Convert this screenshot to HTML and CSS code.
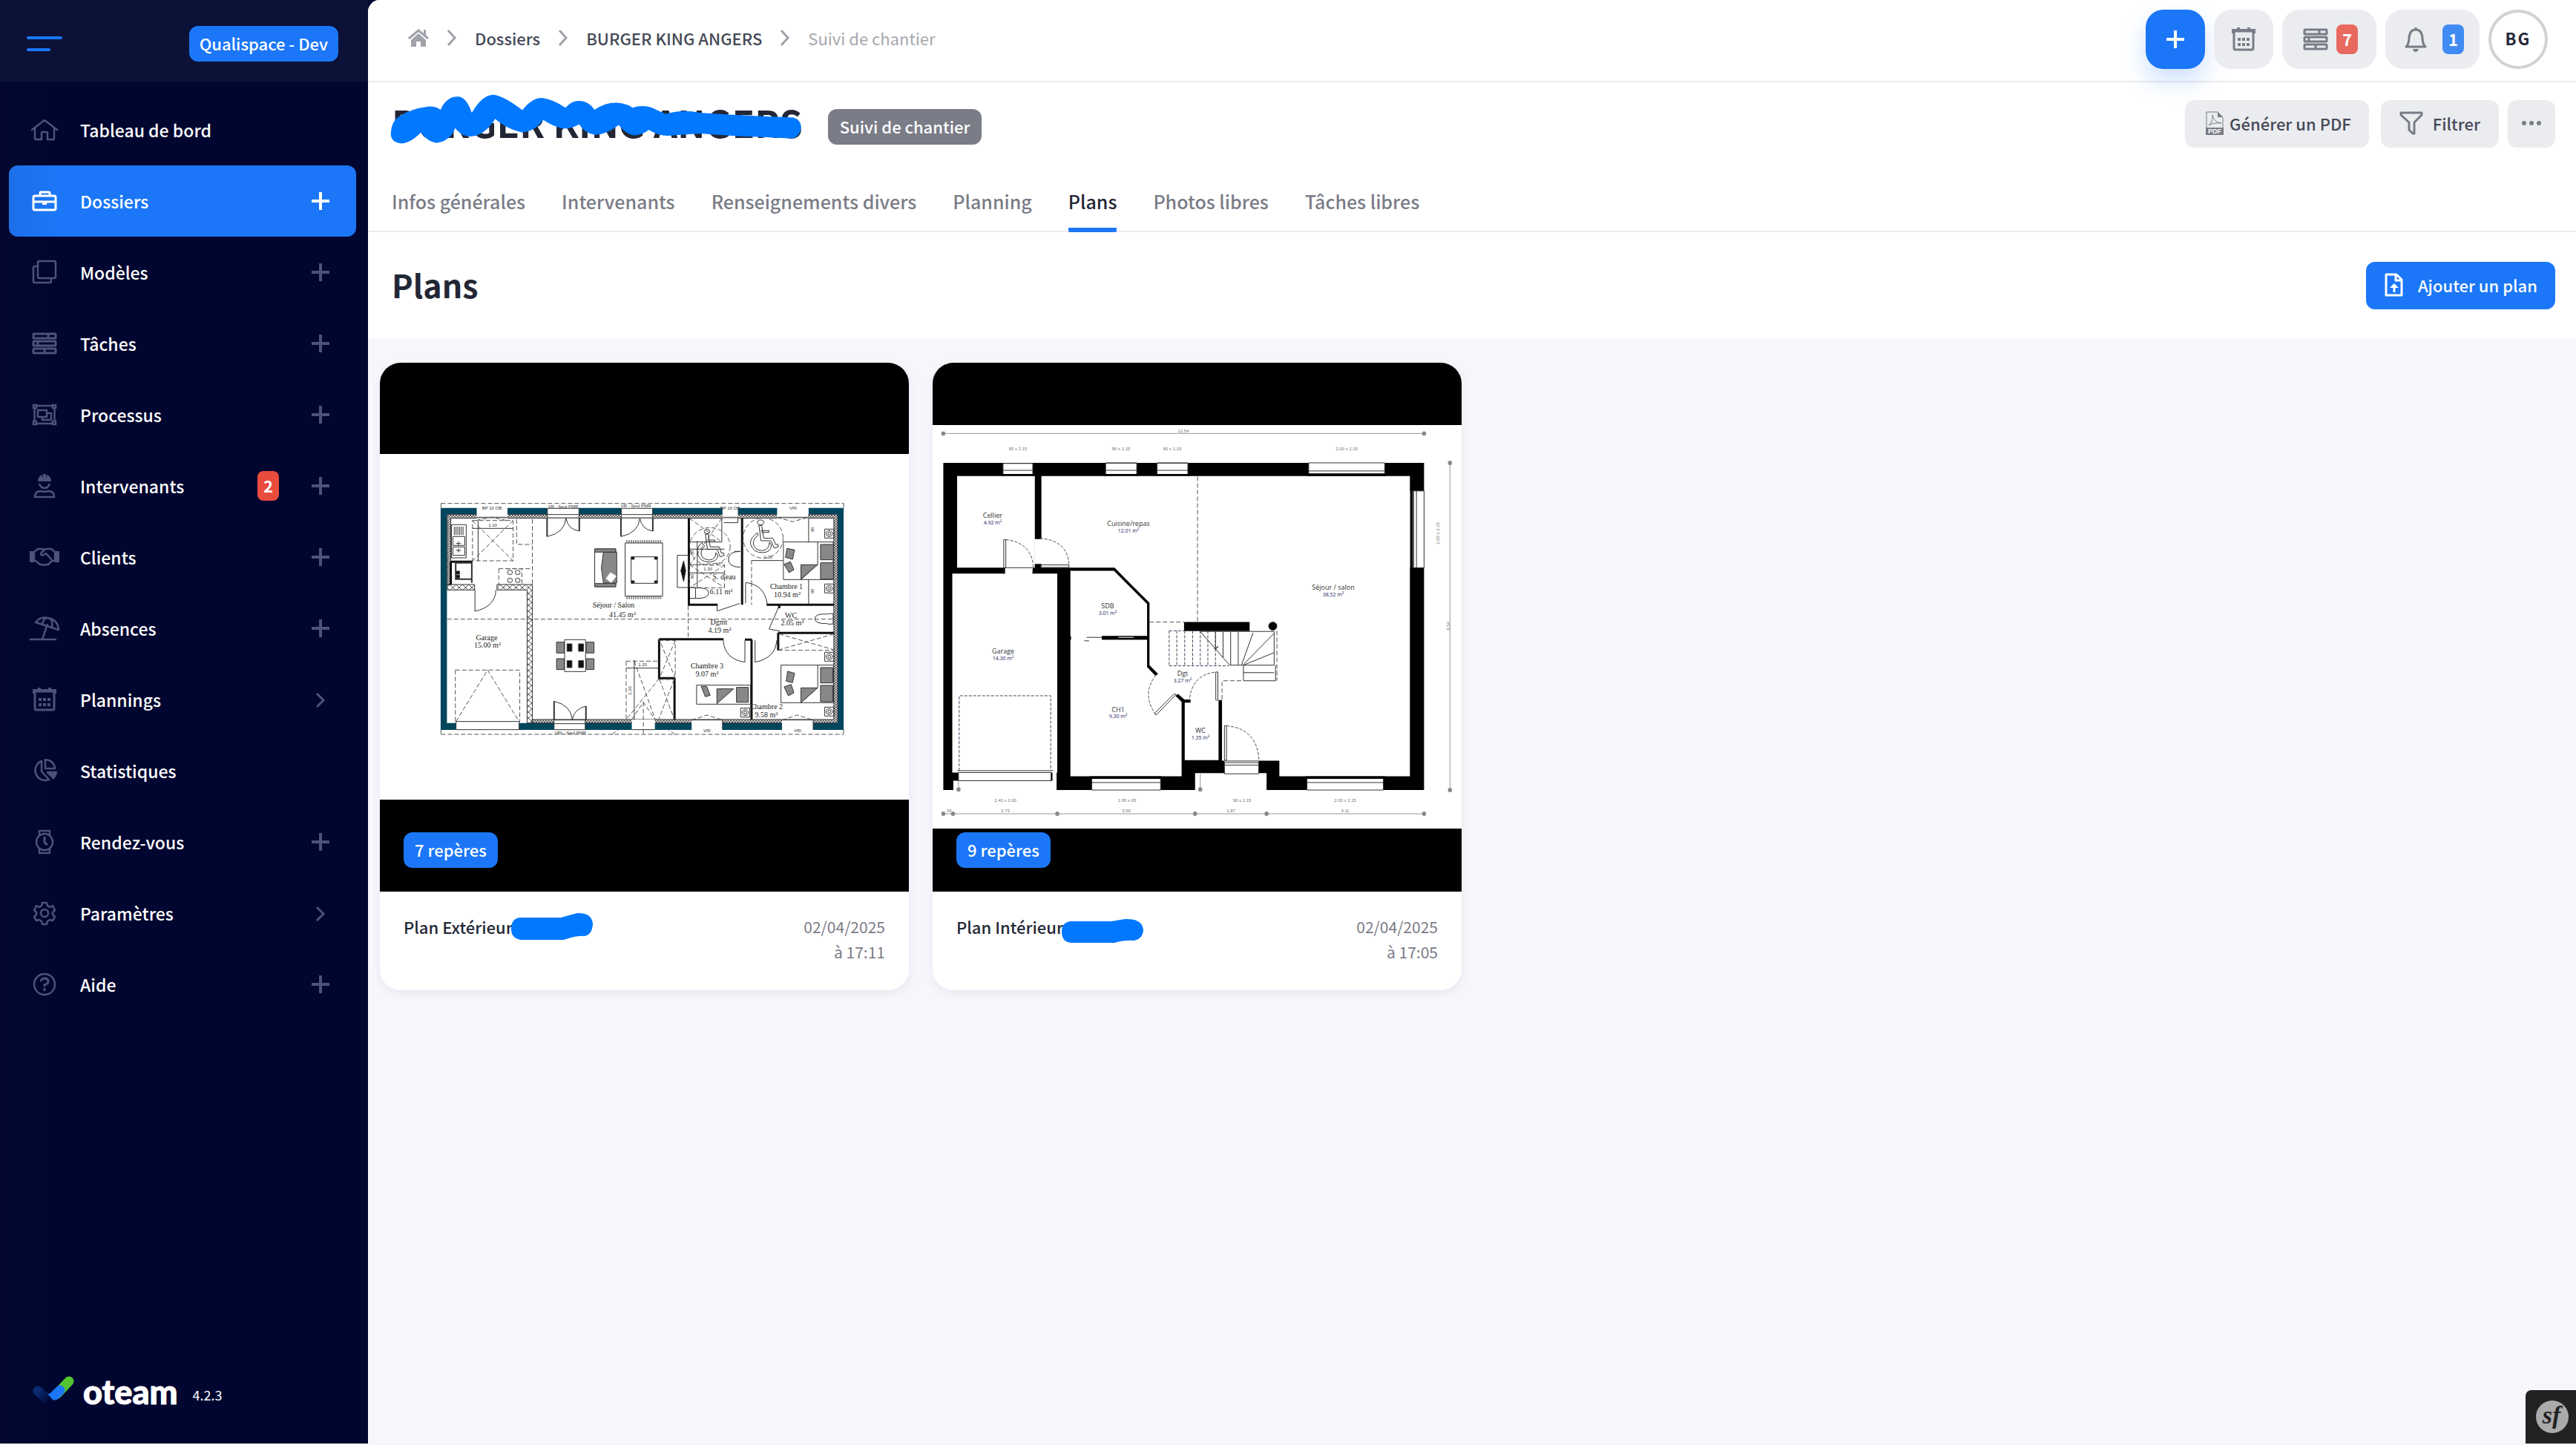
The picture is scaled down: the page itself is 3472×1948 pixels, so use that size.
FILE: index.html
```html
<!DOCTYPE html>
<html lang="fr">
<head>
<meta charset="utf-8">
<title>Plans - BURGER KING ANGERS</title>
<link rel="stylesheet" href="styles.css">
</head>
<body>
<svg class="sprite" aria-hidden="true">
  <symbol id="i-plus" viewBox="0 0 24 24"><path d="M12 0v24M0 12h24" stroke="currentColor" stroke-width="4"/></symbol>
  <symbol id="i-chevron" viewBox="0 0 24 24"><path d="M7 4l9 9-9 9" fill="none" stroke="currentColor" stroke-width="3"/></symbol>
  <symbol id="i-tasks" viewBox="0 0 40 40"><g fill="none" stroke="currentColor" stroke-width="3"><rect x="5" y="7" width="30" height="6" rx="1"/><rect x="5" y="17" width="30" height="6" rx="1"/><rect x="5" y="27" width="30" height="6" rx="1"/><path d="M25 7v6M11 17v6M20 27v6"/></g></symbol>
  <symbol id="i-calendar" viewBox="0 0 40 40"><path d="M6 12V8h28v4M13 4v5M27 4v5" fill="none" stroke="currentColor" stroke-width="4"/><rect x="7" y="9" width="26" height="25" rx="2" fill="none" stroke="currentColor" stroke-width="3"/><path d="M12 20h4M18 20h4M24 20h4M12 27h4M18 27h4M24 27h4" stroke="currentColor" stroke-width="4"/></symbol>
</svg>

<aside class="sidebar">
  <div class="sidebar-head">
    <button class="burger" aria-label="Menu"><span></span><span></span></button>
    <span class="env">Qualispace - Dev</span>
  </div>
  <nav class="menu">
    <a href="#"><svg class="ico" viewBox="0 0 40 40"><g fill="none" stroke="currentColor" stroke-width="2.500" stroke-linejoin="round" stroke-linecap="round"><path d="M3 20L20 7l17 13"/><path d="M7 18v14q0 1 1 1h8v-9q0-1 1-1h6q1 0 1 1v9h8q1 0 1-1V18"/></g></svg><span>Tableau de bord</span></a>
    <a href="#" class="active"><svg class="ico" viewBox="0 0 40 40"><g fill="none" stroke="currentColor" stroke-width="3"><rect x="5" y="13" width="30" height="19" rx="2"/><path d="M14 13V9q0-1 1-1h11q1 0 1 1v4M5 21h30"/><path d="M17 23h6" stroke-width="4"/></g></svg><span>Dossiers</span><svg class="act"><use href="#i-plus"/></svg></a>
    <a href="#"><svg class="ico" viewBox="0 0 40 40"><g fill="none" stroke="currentColor" stroke-width="2.500"><rect x="11" y="5" width="24" height="23" rx="2"/><path d="M11 12H7q-2 0-2 2v18q0 2 2 2h20q2 0 2-2v-4"/></g></svg><span>Modèles</span><svg class="act"><use href="#i-plus"/></svg></a>
    <a href="#"><svg class="ico"><use href="#i-tasks"/></svg><span>Tâches</span><svg class="act"><use href="#i-plus"/></svg></a>
    <a href="#"><svg class="ico" viewBox="0 0 40 40"><g fill="none" stroke="currentColor" stroke-width="2.500"><path d="M9 8h22M9 32h22M6.500 11v18M33.500 11v18"/><rect x="5" y="7" width="4" height="4"/><rect x="31" y="7" width="4" height="4"/><rect x="5" y="29" width="4" height="4"/><rect x="31" y="29" width="4" height="4"/><rect x="11" y="14" width="12" height="9"/><path d="M23 18h6v9H17v-4"/></g></svg><span>Processus</span><svg class="act"><use href="#i-plus"/></svg></a>
    <a href="#"><svg class="ico" viewBox="0 0 40 40"><path d="M11 14q0-7 6-9l1 5V4h4v6l1-5q6 2 6 9z" fill="currentColor"/><path d="M13 17q2 6 7 6t7-6M7 35q0-8 8-8 5 2 10 0 8 0 8 8z" fill="none" stroke="currentColor" stroke-width="2.500"/></svg><span>Intervenants</span><em class="count">2</em><svg class="act"><use href="#i-plus"/></svg></a>
    <a href="#"><svg class="ico" viewBox="0 0 40 40"><path d="M0 12h6v15H0zM34 12h6v15h-6z" fill="currentColor"/><g fill="none" stroke="currentColor" stroke-width="2.500" stroke-linejoin="round"><path d="M6 13l5-4h7l2 1 3-1h6l5 4v12h-4l-5 5-3 0-2 1-3-1-3 0-6-5H6z"/><path d="M20 10l-5 5q0 4 4 2l3-2 8 9"/></g></svg><span>Clients</span><svg class="act"><use href="#i-plus"/></svg></a>
    <a href="#"><svg class="ico" viewBox="0 0 40 40"><g fill="none" stroke="currentColor" stroke-width="2.500" stroke-linejoin="round"><path d="M0 35h36M24 14l-7 21"/><path d="M8 12Q14 4 24 6q14 2 15 16zM17 14q2-9 8-8 7 2 5 13"/></g></svg><span>Absences</span><svg class="act"><use href="#i-plus"/></svg></a>
    <a href="#"><svg class="ico"><use href="#i-calendar"/></svg><span>Plannings</span><svg class="act"><use href="#i-chevron"/></svg></a>
    <a href="#"><svg class="ico" viewBox="0 0 40 40"><g fill="none" stroke="currentColor" stroke-width="2.500" stroke-linejoin="round"><path d="M16 7a13 13 0 1 0 10 25L16 21zM21 5v12h13q-1-11-13-12z"/><path d="M24 22h12q-1 5-4 8z" fill="currentColor"/></g></svg><span>Statistiques</span></a>
    <a href="#"><svg class="ico" viewBox="0 0 40 40"><g fill="none" stroke="currentColor" stroke-width="2.500"><circle cx="20" cy="20" r="11"/><path d="M13 11V5h14v6M13 29v6h14v-6"/><path d="M20 13v8l4 3" stroke-width="3"/></g></svg><span>Rendez-vous</span><svg class="act"><use href="#i-plus"/></svg></a>
    <a href="#"><svg class="ico" viewBox="0 0 40 40"><g fill="none" stroke="currentColor" stroke-width="2.500" stroke-linejoin="round"><path d="M17 6h6l1 4 3 2 4-2 3 6-3 3v3l3 3-3 5-4-1-3 2-1 4h-6l-1-4-3-2-4 1-3-5 3-3v-3l-3-3 3-6 4 2 3-2z"/><circle cx="20" cy="20" r="5"/></g></svg><span>Paramètres</span><svg class="act"><use href="#i-chevron"/></svg></a>
    <a href="#"><svg class="ico" viewBox="0 0 40 40"><g fill="none" stroke="currentColor"><circle cx="20" cy="20" r="14" stroke-width="2.500"/><path d="M15 16q1-4 5-4 5 0 5 4 0 3-5 5v2M20 25v4" stroke-width="3"/></g></svg><span>Aide</span><svg class="act"><use href="#i-plus"/></svg></a>
  </nav>
  <div class="brand">
    <svg class="brand-mark" viewBox="0 0 56 44"><defs><linearGradient id="navy" x1="0" y1="0" x2="1" y2="1"><stop offset="0" stop-color="#0a2a72"/><stop offset="1" stop-color="#010630"/></linearGradient></defs><g fill="none" stroke-linecap="round" stroke-width="13"><path d="M7 21l16 15" stroke="url(#navy)"/><path d="M33 25L49 8" stroke="#52c42f"/><path d="M30 27l7-7" stroke="#1b77f7"/></g><path d="M20 25q5 0 8-4l5 9-4 4z" fill="#1b77f7"/></svg>
    <span class="brand-name">oteam</span>
    <span class="version">4.2.3</span>
  </div>
</aside>

<main class="page">
  <header class="topbar">
    <nav class="crumbs">
      <a href="#" aria-label="Accueil"><svg class="home" viewBox="0 0 28 24"><path d="M14 6L4 15v9h7v-7h6v7h7v-9z" fill="currentColor"/><path d="M1 13L14 2l13 11" fill="none" stroke="currentColor" stroke-width="3"/><path d="M21 1h3v7h-3z" fill="currentColor"/></svg></a>
      <svg class="sep" viewBox="0 0 14 24"><path d="M2 2l9 10-9 10" fill="none" stroke="currentColor" stroke-width="3"/></svg>
      <a href="#">Dossiers</a>
      <svg class="sep" viewBox="0 0 14 24"><path d="M2 2l9 10-9 10" fill="none" stroke="currentColor" stroke-width="3"/></svg>
      <a href="#">BURGER KING ANGERS</a>
      <svg class="sep" viewBox="0 0 14 24"><path d="M2 2l9 10-9 10" fill="none" stroke="currentColor" stroke-width="3"/></svg>
      <span class="here">Suivi de chantier</span>
    </nav>
    <div class="tools">
      <button class="tool add" aria-label="Ajouter"><svg viewBox="0 0 24 24"><path d="M12 0v24M0 12h24" stroke="currentColor" stroke-width="4"/></svg></button>
      <button class="tool" aria-label="Calendrier"><svg class="ico"><use href="#i-calendar"/></svg></button>
      <button class="tool wide" aria-label="Tâches"><svg class="ico"><use href="#i-tasks"/></svg><em class="count soft">7</em></button>
      <button class="tool wide" aria-label="Notifications"><svg class="ico" viewBox="0 0 40 40"><path d="M20 4v3M7 30q4-4 4-12 1-11 9-11t9 11q0 8 4 12z" fill="none" stroke="currentColor" stroke-width="3" stroke-linejoin="round"/><path d="M16 33h8q-1 4-4 4t-4-4z" fill="currentColor"/></svg><em class="count info">1</em></button>
      <button class="avatar">BG</button>
    </div>
  </header>

  <section class="heading">
    <div class="heading-row">
      <div class="title">
        <h1>BURGER KING ANGERS</h1>
        <svg class="scribble" viewBox="62 380 968 205" preserveAspectRatio="none"><path d="M65 540Q66 490 85 470Q110 440 155 430Q172 430 182 443Q195 390 222 390Q242 390 255 455Q280 382 305 382Q330 386 374 445Q395 395 420 395Q445 400 475 435Q490 405 507 407Q530 408 543 443Q570 413 595 415Q620 418 632 435Q662 418 690 445L710 460Q750 440 790 455L860 463L940 470L1010 475Q1028 485 1028 515Q1026 550 1008 560L880 550L790 540L715 549Q692 549 670 525Q655 548 635 547Q615 540 600 505Q570 545 545 545Q520 540 507 502Q485 525 465 518Q445 510 423 485Q400 535 372 535Q335 520 310 480Q285 550 250 552Q230 550 216 518Q205 570 172 578Q150 572 136 535Q110 580 88 580Q65 575 65 540Z"/></svg>
      </div>
      <span class="status">Suivi de chantier</span>
      <div class="actions">
        <button class="btn pdf"><svg viewBox="0 0 24 32"><path d="M1 31V1h15l7 7v23z" fill="none" stroke="currentColor"/><path d="M16 1v7h7z" fill="currentColor"/><path d="M4 19q6-5 5-14 2 10 12 11-10-1-17 3z" fill="none" stroke="currentColor"/><path d="M0 22h24v10H0z" fill="currentColor"/><text x="12" y="30" text-anchor="middle">PDF</text></svg>Générer un PDF</button>
        <button class="btn filter"><svg viewBox="0 0 32 32"><path d="M2 2h28v3L20 15v15h-2l-5-5V15L2 5z" fill="none" stroke="currentColor" stroke-width="3" stroke-linejoin="round"/></svg>Filtrer</button>
        <button class="btn more" aria-label="Plus d'options"><svg viewBox="0 0 28 8"><circle cx="4" cy="4" r="3"/><circle cx="14" cy="4" r="3"/><circle cx="24" cy="4" r="3"/></svg></button>
      </div>
    </div>
    <nav class="tabs">
      <a href="#">Infos générales</a>
      <a href="#">Intervenants</a>
      <a href="#">Renseignements divers</a>
      <a href="#">Planning</a>
      <a href="#" class="on">Plans</a>
      <a href="#">Photos libres</a>
      <a href="#">Tâches libres</a>
    </nav>
  </section>

  <section class="section-head">
    <h2>Plans</h2>
    <button class="btn primary"><svg viewBox="0 0 32 32"><path d="M5 2h14l7 7v21H5zM18 2v8h8" fill="none" stroke="currentColor" stroke-width="3" stroke-linejoin="round"/><path d="M16 26v-7" stroke="currentColor" stroke-width="3"/><path d="M10 20l6-6 6 6z" fill="currentColor"/></svg>Ajouter un plan</button>
  </section>

  <section class="cards">
    <article class="card">
      <div class="thumb">
        <svg class="plan" viewBox="0 0 713 713">
          <defs>
            <pattern id="dots" width="8" height="10" patternUnits="userSpaceOnUse"><rect width="8" height="10" fill="#fff"/><path d="M0 0l8 10M8 0l-8 10" stroke="#222" stroke-width="2"/></pattern>
            <pattern id="cross" width="18" height="24" patternUnits="userSpaceOnUse"><path d="M0 0l18 24M18 0L0 24" stroke="#222" stroke-width="2"/></pattern>
          </defs>
          <rect y="123" width="713" height="466" fill="#fff"/>
          <g class="lines" transform="translate(-12 111) scale(.4719 .3333)">
            <path class="dash" d="M200 236H1350M200 1170H1350M200 236v30M1350 236v30M200 1150v20M1350 1150v20"/>
            <path fill="#02465e" stroke="none" fill-rule="evenodd" d="M199 254H1350V1152H199zM217 280V1124H1333V280z"/>
            <path fill="url(#dots)" d="M218 281H1333V1124H460V1110H1322V296H228V565H218z"/>
            <path fill="url(#cross)" d="M218 564h78v22h-78zM360 564h101v560h-15V586h-86z"/>
            <path fill="#fff" stroke="none" d="M302 252h88v44h-88zM504 252h90v44h-90zM715 252h89v44h-89zM1004 252h44v44h-44zM1160 252h90v44h-90zM243 1116h180v38H243zM523 1112h89v42h-89zM745 1110h66v44h-66zM916 1110h88v44h-88zM1174 1110h89v44h-89z"/>
            <path d="M302 292h88M504 256h90v38h-90zM715 256h89v38h-89zM504 281h90M715 281h89M1004 292h44M1160 292h90M243 1118h180v33H243zM523 1112h89v39h-89zM523 1127h89M745 1151h66M916 1112h88v39M1174 1112h89v39"/>
            <path class="mid" d="M503 296v74M595 296v52M714 296v74M805 296v52M523 1112v-76M614 1112v-56"/>
            <path d="M503 370q50-14 54-74 6 46 38 52M714 370q50-14 54-74 6 46 37 52M523 1036q48 16 52 74 6-44 39-54M297 586v86q58-18 60-86M1006 790q4 76 62 88v-88M1097 790v88q58-16 62-88M1070 640v-84q54 8 62 88M989 645v26l64-30M1166 650l-29 94 30 8"/>
            <path class="wall" d="M908 296v350h82M1060 296v350M1130 646h192M1166 650v10M823 785h184M1068 787h20M823 785v158h44M867 943v168M1087 787v324M1163 760h160M1163 760v70M228 472h62M228 472v92"/>
            <path class="mid" d="M242 476v66h46v15M288 476v66M242 476h46"/>
            <path class="dash" d="M461 300v265M416 300v102h45M365 500h96M365 500v65M385 500h46v60M218 704h1104M906 650v126M290 305h116v163H290zM290 305l116 163M406 305L290 468M241 910h184v210M241 910v210M243 1118l90-208 90 208M729 874h94M729 874v236l92-162M752 874l60 236M745 1110l33-70 33 70M778 1040v130M688 1170l20-20M868 1170l-20-20M822 790h47v152l-44-150M869 790l-44 150M822 948h44M866 948l-44 160M824 948l42 160M910 485h100v92H910zM910 485l100 92M1010 485l-100 92M910 296l92 96M1002 296l-92 190 95-10M1166 764l156 64M1322 764l-156 64M1163 830h160M1087 466v90M1087 556v90M1250 280v10M300 305l46-14 40 14M1160 292l44 18 46-18M916 1112l44-20 44 20M1174 1112l44-20 44 20"/>
            <path d="M306 305v163M290 337h116M752 870v242M729 902h94M1087 467h90M1250 296v96M1250 544v100M932 388v188M910 421h100M910 517h100M1002 296v96h-92M1038 430h17M1048 294v20h-40"/>
            <path d="M230 322h42v134h-42zM234 370h34v36h-34zM234 412h34v34h-34zM238 330v34M243 330v34M248 330v34M253 330v34M258 330v34M263 330v34M243 398h14M243 426h14M250 390v16M250 418v16M1055 430q-34 0-34 32t34 32M911 576h16v44h-16M927 578q36-4 38 20 0 24-38 22M1304 682h16v42h-16M1304 684q-36-4-36 18 0 22 36 20"/>
            <ellipse class="dash" cx="968" cy="410" rx="58" ry="76"/><ellipse class="dash" cx="1120" cy="376" rx="57" ry="81"/>
            <g><ellipse cx="1113" cy="313" rx="9" ry="10"/><path d="M1108 325l6 62h28l10 30 12-6-2-10-6 2-8-26h-26l-6-52zM1113 346h24v7h-22M1104 355q-22 20-20 46 8 36 36 34 22-2 24-30l-6-12q0 32-22 34-22-4-24-28 0-22 14-34z"/><ellipse cx="960" cy="350" rx="8" ry="9"/><path d="M955 360l6 62h28l8 30 12-6-2-10-6 2-6-26h-26l-6-52zM960 384h22v7h-20M945 395q-16 20-12 46 8 34 34 32 22-2 24-26l-6-12q0 28-20 30-20-4-22-24 0-20 10-32z"/></g>
            <path d="M726 396h107v215H726zM743 452h75v107h-75zM639 420h60v153h-60zM875 446h32v130h-32zM553 787h60v129h-60zM1178 392h142v152h-142zM1276 392v90l-48 62M1171 890h150v152h-150zM1276 890v90l-48 62M930 971h154v77H930z"/>
            <path class="teeth" d="M730 390h102M730 617h102"/>
            <path class="grey" d="M664 433h38v125h-38l-6-60zM639 420h60v13h-60zM639 560h60v13h-60zM1284 402h37v62h-37zM1284 476h37v66h-37zM1228 484h48l-48 58zM1188 418l22 6-6 38-20-8zM1180 482l18-10 10 32-14 12zM1284 900h35v62h-35zM1284 972h35v66h-35zM1228 982h48l-48 60zM1190 915l20 8-6 38-18-6zM1180 978l20-10 8 34-16 12zM1044 980h34v60h-34zM988 986h48l-48 60zM943 976l16 0 10 36-14 6zM530 797h22v44h-22zM615 797h22v44h-22zM530 864h22v44h-22zM615 864h22v44h-22z"/>
            <path fill="#fff" stroke="#fff" d="M672 540l12-24 16 14-14 26z"/>
            <path fill="#111" d="M560 804h14v30h-14zM593 804h14v30h-14zM560 872h14v28h-14zM593 872h14v28h-14zM744 453h8v9h-8zM810 453h8v9h-8zM744 549h8v9h-8zM810 549h8v9h-8zM893 468l6 40-6 44-8-44zM243 510h10v12h-10zM243 526h10v12h-10z"/>
            <g><ellipse cx="1309" cy="358" rx="9" ry="12"/><ellipse cx="1309" cy="358" rx="4" ry="6"/><path d="M1296 340h26v36h-26zM1296 562h26v36h-26zM1296 838h26v36h-26zM1296 1060h26v36h-26zM1056 1064h26v36h-26z"/><ellipse cx="1309" cy="580" rx="9" ry="12"/><ellipse cx="1309" cy="580" rx="4" ry="6"/><ellipse cx="1309" cy="856" rx="9" ry="12"/><ellipse cx="1309" cy="856" rx="4" ry="6"/><ellipse cx="1309" cy="1078" rx="9" ry="12"/><ellipse cx="1309" cy="1078" rx="4" ry="6"/><ellipse cx="1069" cy="1082" rx="9" ry="12"/><ellipse cx="1069" cy="1082" rx="4" ry="6"/></g>
            <g><ellipse cx="397" cy="515" rx="7" ry="9"/><ellipse cx="419" cy="515" rx="7" ry="9"/><ellipse cx="397" cy="547" rx="7" ry="9"/><ellipse cx="419" cy="547" rx="7" ry="9"/></g>
          </g>
          <g class="serif">
            <text x="315" y="330">Séjour / Salon</text><text x="327" y="343">41.45 m²</text>
            <text x="144" y="374">Garage</text><text x="145" y="384">15.00 m²</text>
            <text x="464" y="292">S. d'eau</text><text x="460" y="312">6.11 m²</text>
            <text x="548" y="305">Chambre 1</text><text x="549" y="316">10.94 m²</text>
            <text x="554" y="344">WC</text><text x="556" y="354">2.05 m²</text>
            <text x="457" y="353">Dgmt</text><text x="458" y="364">4.19 m²</text>
            <text x="441" y="412">Chambre 3</text><text x="441" y="423">9.07 m²</text>
            <text x="521" y="467">Chambre 2</text><text x="521" y="478">9.58 m²</text>
          </g>
          <g class="tiny">
            <text x="151" y="198">BP 10 OB</text><text x="247" y="196">VR - Seul PMR</text><text x="345" y="195">VR - Seul PMR</text><text x="472" y="198">BP 10 OB</text><text x="557" y="198">VRI</text>
            <text x="257" y="501">VRI - Seul PMR</text><text x="441" y="498">VRI</text><text x="563" y="498">VRI</text>
            <text x="152" y="221">1.10</text><text x="523" y="264">1.20</text><text x="442" y="280">1.30</text><text x="354" y="409">1.20</text><text x="339" y="442" transform="rotate(-90 339 442)">2.20</text>
            <text x="585" y="225" transform="rotate(-90 585 225)">90</text><text x="585" y="308" transform="rotate(-90 585 308)">90</text><text x="423" y="256" transform="rotate(-90 423 256)">80</text><text x="423" y="288" transform="rotate(-90 423 288)">80</text>
          </g>
        </svg>
        <span class="marks">7 repères</span>
      </div>
      <footer><h3>Plan Extérieur<svg class="mask" viewBox="0 0 112 44"><path d="M12 9H68L90 3Q110 2 111 18 110 32 100 34 90 33 72 39H14Q1 37 1 24 1 11 12 9z"/></svg></h3><time>02/04/2025<br>à 17:11</time></footer>
    </article>

    <article class="card">
      <div class="thumb">
        <svg class="plan" viewBox="0 0 713 713">
          <rect y="84" width="713" height="544" fill="#fff"/>
          <g class="lines" transform="translate(-7 -9) scale(.4655 .4209)">
            <path stroke="none" fill="#000" fill-rule="evenodd" d="M46 342H1438V1390H982V1336H775V1390H374V1334H362V1360H75V1390H46zM86 384V678H311V384zM330 384V678H542L643 790V990L668 1018 660 1024 636 996V908H414V1346H736V1108L718 1088 726 1082 744 1100H762V1110H745V1294H843V1102H853V1296H1019V1346H1397V384zM72 697V1334H376V697zM414 688V898H636V794L540 688z"/>
            <path stroke="none" fill="#fff" d="M310 586h22v80h-22zM225 676h80v24h-80zM219 344h86v40h-86zM516 344h90v40h-90zM665 344h89v40h-89zM1104 342h220v38h-220zM1397 432h42v246h-42zM90 1328h268v32H90zM476 1348h199v42H476zM1099 1348h221v42h-221zM860 1298h99v40h-99zM416 892h89v20h-89z"/>
            <path d="M219 344h86v36h-86zM219 366h86M516 342h90v38h-90zM516 366h90M665 342h89v38h-89zM665 366h89M1104 342h220v36h-220zM1104 368h220M1408 432h30v246h-30zM1416 432v246M90 1334h268v26H90zM86 1328h278M476 1352h199v38H476zM476 1366h199M1099 1352h221v38h-221zM1099 1366h221M860 1302h99v36h-99zM860 1310h99M221 588h6v90h-6zM328 669h82v8h-82zM835 1012h6v90h-6zM860 1184h6v110h-6zM662 1150l58-66-6-2-56 62zM225 678h80M461 901h50M454 912h14M305 684v14M221 684v14"/>
            <path stroke="none" fill="#000" d="M743 852h190v29H743zM505 896h132v12H505zM512 378h98v6h-98zM660 378h98v6h-98zM1100 376h228v8h-228zM1398 430h8v252h-8zM470 1346h208v8H470zM1095 1346h230v8h-230zM215 378h94v6h-94z"/>
            <path stroke="#fff" d="M553 901h44"/>
            <ellipse cx="1000" cy="865" rx="12" ry="13" fill="#000"/>
            <path class="dash blue" d="M92 1328V1088H357V1328M227 588q76 10 80 90M326 584q80 6 84 84M662 1022q-44 60 0 128M758 1108q6-88 78-96M866 1184q90 10 94 112M700 880H790M700 992H872M700 880V992M722 880V992M745 880V992M768 880V992M790 880V992M812 880V992M834 880V992"/>
            <path class="dash" d="M782 386V852M643 852H743M853 1100V1040H912M1012 880v160"/>
            <path d="M790 882H1004V990H915M790 882L875 990H915V1040H1008V990M915 1014H1004M856 884V966M878 884V990M900 884V990M834 884v56M943 886L910 988M1004 888L915 988M1004 950L915 990M834 940l8-10-12 8"/>
            <path class="grey-line" d="M46 248H1438M46 1466H1438M1513 342V1390M90 1362v28M790 1334v56"/>
            <g fill="#888" stroke="none"><ellipse cx="46" cy="248" rx="6" ry="7"/><ellipse cx="1438" cy="248" rx="6" ry="7"/><ellipse cx="46" cy="1466" rx="6" ry="7"/><ellipse cx="74" cy="1466" rx="6" ry="7"/><ellipse cx="376" cy="1466" rx="6" ry="7"/><ellipse cx="775" cy="1466" rx="6" ry="7"/><ellipse cx="982" cy="1466" rx="6" ry="7"/><ellipse cx="1438" cy="1466" rx="6" ry="7"/><ellipse cx="1513" cy="342" rx="6" ry="7"/><ellipse cx="1513" cy="1390" rx="6" ry="7"/><ellipse cx="90" cy="1388" rx="6" ry="7"/><ellipse cx="790" cy="1388" rx="6" ry="7"/></g>
          </g>
          <g class="room">
            <text x="81" y="209">Cellier</text><text x="264" y="220">Cuisine/repas</text><text x="540" y="306">Séjour / salon</text><text x="236" y="331">SDB</text><text x="95" y="392">Garage</text><text x="337" y="422">Dgt</text><text x="250" y="471">CH1</text><text x="361" y="499">WC</text>
          </g>
          <g class="area">
            <text x="81" y="218">4.92 m²</text><text x="264" y="229">12.01 m²</text><text x="540" y="315">38.52 m²</text><text x="236" y="340">3.01 m²</text><text x="95" y="401">14.30 m²</text><text x="337" y="431">3.27 m²</text><text x="250" y="479">9.30 m²</text><text x="361" y="508">1.35 m²</text>
          </g>
          <g class="tiny pale">
            <text x="338" y="94">12.54</text><text x="115" y="118">80 x 2.15</text><text x="254" y="118">80 x 1.15</text><text x="323" y="118">80 x 1.15</text><text x="558" y="118">2.00 x 2.15</text>
            <text x="98" y="592">2.40 x 2.00</text><text x="262" y="592">1.80 x 65</text><text x="417" y="592">90 x 2.15</text><text x="556" y="592">2.00 x 2.15</text>
            <text x="22" y="606">34</text><text x="98" y="606">2.73</text><text x="261" y="606">3.59</text><text x="402" y="606">1.87</text><text x="556" y="606">4.11</text>
            <text x="683" y="230" transform="rotate(-90 683 230)">2.00 x 2.15</text><text x="697" y="355" transform="rotate(-90 697 355)">8.54</text>
          </g>
        </svg>
        <span class="marks">9 repères</span>
      </div>
      <footer><h3>Plan Intérieur<svg class="mask" viewBox="0 0 112 44"><path d="M12 14H68L86 11Q110 10 111 26 110 38 98 40 86 39 72 43H14Q1 42 1 28 1 16 12 14z"/></svg></h3><time>02/04/2025<br>à 17:05</time></footer>
    </article>
  </section>
</main>

<button class="debug" aria-label="Symfony"><svg viewBox="0 0 44 44"><circle cx="22" cy="22" r="22" fill="#aaa"/><text x="21" y="31" text-anchor="middle">sf</text></svg></button>
</body>
</html>
```
FILE: styles.css
```css
* { box-sizing: border-box; }

body {
  margin: 0;
  min-height: 100vh;
  display: grid;
  grid-template-columns: 496px 1fr;
  background: #000630;
  border-bottom: 2px solid #f4f6fa;
  color: #232735;
  font: 500 23px/34px "Noto Sans CJK SC", "Noto Sans", sans-serif;
}

a { color: inherit; text-decoration: none; }
button { font: inherit; color: inherit; border: 0; background: none; padding: 0; cursor: pointer; }
h1, h2, h3 { margin: 0; }
svg { display: block; flex: none; }
em { font-style: normal; }
.sprite { position: absolute; width: 0; height: 0; }

/* Sidebar */
.sidebar {
  display: flex;
  flex-direction: column;
  background: linear-gradient(90deg, #040830, #000630 64px);
  color: #fff;
}
.sidebar-head {
  display: flex;
  align-items: center;
  justify-content: space-between;
  height: 110px;
  padding: 8px 40px 0 36px;
  background: #0c1138;
}
.burger { display: flex; flex-direction: column; gap: 12px; }
.burger span { width: 48px; height: 4px; border-radius: 2px; background: #1b77f7; }
.burger span + span { width: 32px; }
.env {
  padding: 6px 14px 8px;
  border-radius: 12px;
  background: #1b77f7;
  font-size: 22px;
}
.menu { display: flex; flex-direction: column; padding: 17px 16px 0 12px; }
.menu a {
  display: flex;
  align-items: center;
  height: 96px;
  padding: 0 36px 0 28px;
  border-radius: 12px;
}
.menu span { flex: 1; margin-left: 28px; }
.ico { width: 40px; height: 40px; color: #4d527a; }
.act { width: 24px; height: 24px; color: #4d527a; }
.menu .active { background: linear-gradient(90deg, #1d6fe8, #1b77f7 64px); }
.menu .active svg { color: #fff; }
.count {
  min-width: 29px;
  height: 40px;
  margin-right: 44px;
  border-radius: 8px;
  background: #e84c3d;
  color: #fff;
  font-weight: 700;
  font-size: 22px;
  line-height: 38px;
  text-align: center;
}
.brand {
  display: flex;
  align-items: center;
  gap: 12px;
  margin-top: auto;
  padding: 0 44px 46px;
}
.brand-mark { width: 56px; height: 44px; }
.brand-name { font: 900 45px/48px Lato, sans-serif; -webkit-text-stroke: 1px #fff; }
.version { margin-left: 8px; padding-top: 8px; font-size: 18px; font-weight: 400; }

/* Page */
.page { background: #f6f7fb; border-top-left-radius: 16px; overflow: hidden; min-width: 0; }
.topbar, .heading, .section-head { background: #fff; }
.topbar {
  display: flex;
  align-items: center;
  justify-content: space-between;
  height: 111px;
  padding: 0 38px 4px 54px;
  border-bottom: 2px solid #ebebed;
}
.crumbs { display: flex; align-items: center; gap: 24px; padding-bottom: 4px; font-size: 22px; color: #454957; }
.crumbs svg { color: #a0a2aa; }
.home { width: 28px; height: 24px; }
.sep { width: 14px; height: 24px; }
.here { color: #a5a7ae; font-weight: 400; }
.tools { display: flex; gap: 12px; }
.tool {
  display: flex;
  align-items: center;
  justify-content: center;
  gap: 8px;
  width: 80px;
  height: 80px;
  border-radius: 24px;
  background: #ebecf0;
}
.tool .ico { color: #797c86; }
.wide { width: 127px; }
.tool .count { margin: 0; }
.tool .soft { background: #e8695e; }
.tool .info { background: #408bf3; margin-left: 8px; }
.add { background: #1b77f7; color: #fff; box-shadow: 0 16px 32px rgba(27, 119, 247, .22); }
.add svg { width: 24px; height: 24px; }
.avatar {
  width: 80px;
  height: 80px;
  padding-bottom: 3px;
  border: 4px solid #d2d2d4;
  border-radius: 50%;
  background: #fff;
  font-weight: 700;
  font-size: 22px;
  letter-spacing: 2px;
}

.heading { padding: 24px 28px 0 32px; border-bottom: 2px solid #ebebed; }
.heading-row { display: flex; align-items: center; height: 64px; }
.title { position: relative; padding-bottom: 6px; }
h1 { font-size: 50px; line-height: 64px; font-weight: 700; }
.scribble { position: absolute; left: -3px; top: -5px; width: 556px; height: 68px; fill: #0078ff; }
.status {
  margin: 8px 0 0 34px;
  padding: 6px 16px 8px;
  border-radius: 12px;
  background: #7a7c87;
  color: #fff;
  font-size: 22px;
}
.actions { display: flex; gap: 12px; margin-left: auto; }
.btn {
  display: flex;
  align-items: center;
  height: 64px;
  padding-bottom: 2px;
  border-radius: 12px;
  background: #ebecf0;
  color: #454957;
  font-size: 22px;
}
.btn svg { color: #797c86; fill: #797c86; }
.pdf { gap: 8px; padding-left: 28px; padding-right: 24px; margin-right: 4px; }
.pdf svg { width: 24px; height: 32px; overflow: visible; }
.pdf text { fill: #fff; font: 700 9px "Liberation Sans", sans-serif; }
.filter { gap: 13px; padding-left: 25px; padding-right: 25px; }
.filter svg { width: 32px; height: 32px; }
.more { width: 64px; justify-content: center; }
.more svg { width: 28px; height: 8px; }

.tabs { display: flex; gap: 49px; margin: 32px 0 -2px; color: #7a7c87; font-size: 25px; }
.tabs a { height: 82px; line-height: 80px; }
.tabs .on { color: #232735; border-bottom: 6px solid #1b77f7; border-radius: 2px; }

.section-head {
  display: flex;
  align-items: center;
  justify-content: space-between;
  padding: 40px 28px 40px 32px;
}
h2 { padding-bottom: 4px; font-size: 43px; line-height: 60px; font-weight: 700; }
.primary { gap: 16px; padding-left: 22px; padding-right: 24px; background: #1b77f7; color: #fff; }
.primary svg { width: 32px; height: 32px; color: #fff; }

/* Plan cards */
.cards {
  display: grid;
  grid-template-columns: repeat(4, 1fr);
  gap: 32px;
  padding: 32px 12px 32px 16px;
}
.card {
  overflow: hidden;
  border-radius: 28px;
  background: #fff;
  box-shadow: 0 4px 12px rgba(60, 60, 110, .08);
}
.thumb { position: relative; background: #000; }
.plan { width: 100%; height: auto; }
.marks {
  position: absolute;
  left: 32px;
  bottom: 32px;
  padding: 6px 15px 8px;
  border-radius: 12px;
  background: #1b77f7;
  color: #fff;
  font-size: 22px;
}
.card footer {
  display: flex;
  justify-content: space-between;
  padding: 30px 32px 35px;
}
h3 { display: flex; font-size: 22px; font-weight: 500; }
.mask { width: 112px; height: 44px; margin: -4px 0 0 -3px; fill: #0078ff; }
time { color: #7a7c87; font-size: 21px; font-weight: 400; text-align: right; }

/* Floor plan linework */
.lines { fill: none; stroke: #333; stroke-width: 1; }
.lines * { vector-effect: non-scaling-stroke; }
.lines .dash { stroke: #555; stroke-dasharray: 6 3; }
.lines .blue { stroke: #444860; stroke-dasharray: 4 2; }
.lines .wall { stroke: #111; stroke-width: 3; }
.lines .mid, .lines .mid * { stroke-width: 2; }
.lines .grey { fill: #888; }
.lines .grey-line { stroke: #999; }
.lines .teeth { stroke-width: 4; stroke-dasharray: 1 2; }
.plan text { text-anchor: middle; }
.serif { font: 400 10px "Liberation Serif", serif; fill: #222; }
.tiny { font: 400 6px "Liberation Sans", sans-serif; fill: #333; }
.pale { fill: #777; }
.room { font: 400 9px "Open Sans", sans-serif; fill: #333; }
.area { font: 400 7px "Open Sans", sans-serif; fill: #22225e; }

.debug {
  position: fixed;
  right: 0;
  bottom: 2px;
  width: 68px;
  height: 72px;
  padding-left: 14px;
  border-top-left-radius: 8px;
  background: #222;
}
.debug svg { width: 44px; height: 44px; }
.debug text { fill: #222; font: italic 700 34px "Liberation Serif", serif; }
```
